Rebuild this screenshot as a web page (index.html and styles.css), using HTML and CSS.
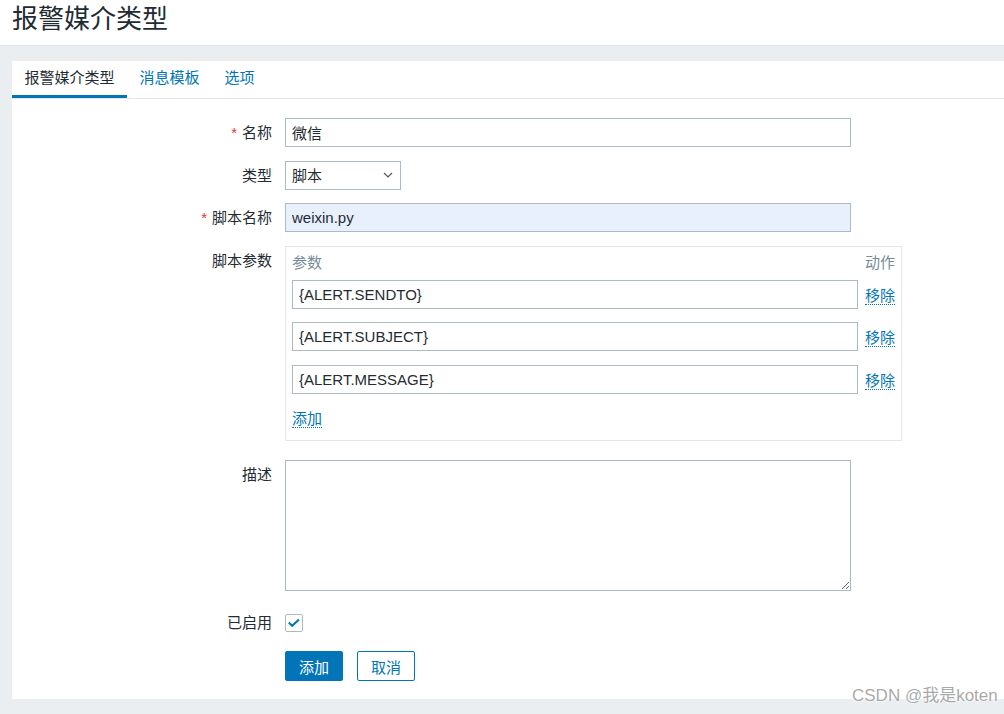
FILE: index.html
```html
<!DOCTYPE html>
<html lang="zh-CN">
<head>
<meta charset="utf-8">
<title>报警媒介类型</title>
<link rel="stylesheet" href="styles.css">
</head>
<body>
<header class="page-header">
  <h1 class="page-title">报警媒介类型</h1>
</header>
<main class="wrapper">
  <section class="panel">
    <nav class="tabs">
      <a class="tab tab-active">报警媒介类型</a>
      <a class="tab">消息模板</a>
      <a class="tab">选项</a>
    </nav>
    <form class="form">
      <div class="row">
        <label class="label"><span class="req">*</span>名称</label>
        <div class="field"><input class="input input-wide" value="微信"></div>
      </div>
      <div class="row">
        <label class="label">类型</label>
        <div class="field">
          <div class="select"><span>脚本</span>
            <svg class="chev" width="10" height="6" viewBox="0 0 10 6"><path d="M1 1l4 4 4-4" fill="none" stroke="#555" stroke-width="1.2"/></svg>
          </div>
        </div>
      </div>
      <div class="row">
        <label class="label"><span class="req">*</span>脚本名称</label>
        <div class="field"><input class="input input-wide input-filled" value="weixin.py"></div>
      </div>
      <div class="row">
        <label class="label">脚本参数</label>
        <div class="field">
          <div class="params">
            <div class="params-head"><span>参数</span><span>动作</span></div>
            <div class="param-row"><input class="input param-input" value="{ALERT.SENDTO}"><a class="link">移除</a></div>
            <div class="param-row"><input class="input param-input" value="{ALERT.SUBJECT}"><a class="link">移除</a></div>
            <div class="param-row"><input class="input param-input" value="{ALERT.MESSAGE}"><a class="link">移除</a></div>
            <a class="link add-link">添加</a>
          </div>
        </div>
      </div>
      <div class="row row-desc">
        <label class="label">描述</label>
        <div class="field"><textarea class="textarea"></textarea></div>
      </div>
      <div class="row row-check">
        <label class="label">已启用</label>
        <div class="field field-center">
          <span class="checkbox"><svg width="18" height="18" viewBox="0 0 18 18"><path d="M3.8 8.6l3.4 3.2 6.8-6.4" fill="none" stroke="#0275b8" stroke-width="2"/></svg></span>
        </div>
      </div>
      <div class="row row-buttons">
        <div class="label"></div>
        <div class="field buttons">
          <button type="button" class="btn btn-primary">添加</button>
          <button type="button" class="btn btn-alt">取消</button>
        </div>
      </div>
    </form>
  </section>
</main>
<div class="watermark">CSDN @我是koten</div>
</body>
</html>
```
FILE: styles.css
```css
* { box-sizing: border-box; }
html, body { margin: 0; padding: 0; }
body {
  width: 1004px;
  height: 714px;
  overflow: hidden;
  position: relative;
  background: #ebeef0;
  font-family: "Liberation Sans", "Noto Sans CJK SC", sans-serif;
  font-size: 15px;
  color: #1f2c33;
}
.page-header {
  background: #fff;
  height: 46px;
  border-bottom: 1px solid #e1e5e8;
  padding-left: 12px;
}
.page-title {
  margin: 0;
  padding-top: 6px;
  font-size: 26px;
  line-height: 26px;
  font-weight: normal;
  color: #1f2c33;
}
.wrapper { padding: 15px 0 0 12px; }
.panel {
  background: #fff;
  padding-bottom: 18px;
}
.tabs {
  display: flex;
  border-bottom: 1px solid #e3e7ea;
}
.tab {
  padding: 0 12.5px;
  line-height: 34px;
  border-bottom: 3px solid transparent;
  color: #0275b8;
  cursor: pointer;
}
.tab-active {
  color: #1f2c33;
  border-bottom-color: #0275b8;
}
.form {
  padding-top: 19px;
  display: flex;
  flex-direction: column;
  gap: 13.5px;
}
.row { display: flex; align-items: flex-start; }
.row-desc { margin-top: 6px; }
.row-check { margin-top: 3.5px; }
.row-buttons { margin-top: 0.5px; }
.label {
  width: 260px;
  flex: none;
  margin-right: 13px;
  text-align: right;
  line-height: 29px;
}
.req { color: #e33734; margin-right: 5px; }
.field { display: flex; }
.field-center { height: 29px; align-items: center; }
.input {
  height: 29px;
  border: 1px solid #acbbc2;
  padding: 0 6px;
  font: inherit;
  color: #1f2c33;
  background: #fff;
  border-radius: 0;
  outline: none;
}
.input-wide { width: 566px; }
.input-filled { background: #e8f0fe; }
.select {
  width: 116px;
  height: 29px;
  border: 1px solid #acbbc2;
  padding: 0 7px 0 6px;
  display: flex;
  align-items: center;
  justify-content: space-between;
  line-height: 27px;
}
.chev { display: block; }
.params {
  width: 617px;
  border: 1px solid #e4e7ea;
  padding: 6px 6px 12px 6px;
  display: flex;
  flex-direction: column;
  align-items: flex-start;
}
.params-head {
  width: 100%;
  display: flex;
  justify-content: space-between;
  line-height: 20px;
  color: #768d99;
  margin-bottom: 7px;
}
.param-row {
  width: 100%;
  display: flex;
  align-items: center;
  justify-content: space-between;
  margin-bottom: 13.5px;
}
.param-row:nth-of-type(4) { margin-bottom: 0; }
.param-input { width: 566px; }
.link {
  color: #0275b8;
  line-height: 17px;
  border-bottom: 1px dotted #0275b8;
  cursor: pointer;
  display: inline-block;
}
.param-row .link { margin-top: 3px; }
.add-link { margin-top: 16px; }
.textarea {
  width: 566px;
  height: 131px;
  border: 1px solid #acbbc2;
  font: inherit;
  border-radius: 0;
  outline: none;
  display: block;
}
.checkbox {
  width: 18px;
  height: 18px;
  border: 1px solid #acbbc2;
  border-radius: 2px;
  background: #fff;
  display: flex;
  align-items: center;
  justify-content: center;
}
.checkbox svg { display: block; margin: -1px; }
.buttons { gap: 14px; }
.btn {
  width: 58px;
  height: 30px;
  border: 1px solid #0275b8;
  border-radius: 2px;
  font: inherit;
  padding: 0;
  cursor: pointer;
}
.btn-primary { background: #0275b8; color: #fff; }
.btn-alt { background: #fff; color: #0275b8; }
.watermark {
  position: absolute;
  left: 852px;
  top: 686px;
  font-size: 17px;
  line-height: 20px;
  color: rgba(140, 140, 140, 0.75);
  text-shadow: 0 0 2px #fff, 0 0 3px #fff;
  white-space: nowrap;
}
```
